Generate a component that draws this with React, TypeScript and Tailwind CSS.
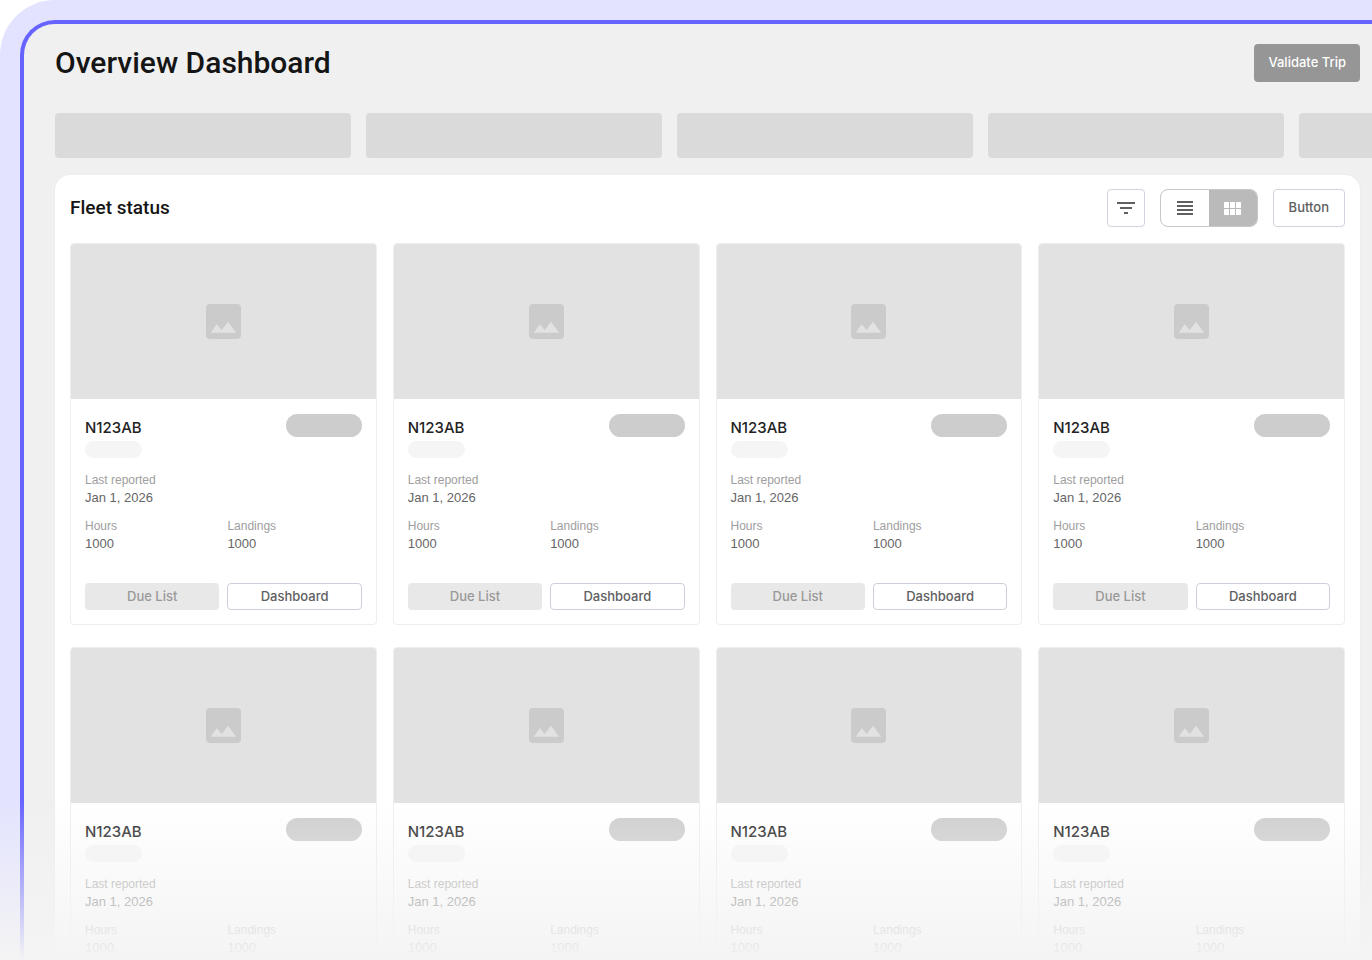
import React from 'react';

interface Aircraft {
  id: number;
  registration: string;
  lastReported: string;
  hours: number;
  landings: number;
}

const fleet: Aircraft[] = Array.from({ length: 8 }, (_, i) => ({
  id: i + 1,
  registration: 'N123AB',
  lastReported: 'Jan 1, 2026',
  hours: 1000,
  landings: 1000,
}));

const FilterIcon: React.FC = () => (
  <svg width="18" height="12" viewBox="0 0 18 12" fill="currentColor" aria-hidden="true">
    <rect width="18" height="2" />
    <rect x="3" y="5" width="12" height="2" />
    <rect x="7" y="10" width="4" height="2" />
  </svg>
);

const ListIcon: React.FC = () => (
  <svg width="16" height="14" viewBox="0 0 16 14" fill="currentColor" aria-hidden="true">
    <rect width="16" height="2" />
    <rect y="4" width="16" height="2" />
    <rect y="8" width="16" height="2" />
    <rect y="12" width="16" height="2" />
  </svg>
);

const GridIcon: React.FC = () => (
  <svg width="17" height="13" viewBox="0 0 17 13" fill="currentColor" aria-hidden="true">
    <rect width="5" height="6" rx="0.6" />
    <rect x="6" width="5" height="6" rx="0.6" />
    <rect x="12" width="5" height="6" rx="0.6" />
    <rect y="7" width="5" height="6" rx="0.6" />
    <rect x="6" y="7" width="5" height="6" rx="0.6" />
    <rect x="12" y="7" width="5" height="6" rx="0.6" />
  </svg>
);

const ImageIcon: React.FC = () => (
  <svg width="35" height="35" viewBox="0 0 35 35" aria-hidden="true">
    <rect width="35" height="35" rx="4" fill="#cbcbcb" />
    <path d="M4.8 28.8L10.7 20.3L15.7 26L22 17.7L30.2 28.8Z" fill="#e2e2e2" />
  </svg>
);

const Field: React.FC<{ label: string; value: string | number }> = ({ label, value }) => (
  <div>
    <dt className="text-xs leading-[17px] text-[#9e9e9e]">{label}</dt>
    <dd className="text-[13px] leading-[17px] text-[#666666]">{value}</dd>
  </div>
);

interface AircraftCardProps {
  aircraft: Aircraft;
  showActions: boolean;
}

const AircraftCard: React.FC<AircraftCardProps> = ({ aircraft, showActions }) => (
  <article className="overflow-hidden rounded-[4px] border border-[#ededf3] bg-white">
    <div className="flex h-[155px] items-center justify-center bg-[#e2e2e2]">
      <ImageIcon />
    </div>
    <div className="p-[14px] pt-[15px]">
      <div className="flex items-start justify-between">
        <h3 className="font-['Inter',sans-serif] text-[15px] leading-[27px] font-medium text-[#222222]">
          {aircraft.registration}
        </h3>
        <span className="h-[23px] w-[76px] rounded-full bg-[#cdcdcd]" />
      </div>
      <div className="h-[17px] w-[57px] rounded-full bg-[#f5f5f5]" />
      <dl className="mt-[14px] grid grid-cols-2 gap-x-2 gap-y-3">
        <div className="col-span-2">
          <Field label="Last reported" value={aircraft.lastReported} />
        </div>
        <Field label="Hours" value={aircraft.hours} />
        <Field label="Landings" value={aircraft.landings} />
      </dl>
      {showActions && (
        <div className="mt-[31px] grid grid-cols-2 gap-2 font-['Inter',sans-serif] text-[13px] font-medium">
          <button type="button" className="h-[27px] rounded-[4px] bg-[#e8e8e8] text-[#999999]">
            Due List
          </button>
          <button
            type="button"
            className="h-[27px] rounded-[4px] border border-[#cfcfda] bg-white text-[#606060]"
          >
            Dashboard
          </button>
        </div>
      )}
    </div>
  </article>
);

const App: React.FC = () => {
  return (
    <div className="relative h-screen overflow-hidden bg-white font-['Liberation_Sans',Arial,sans-serif]">
      <div className="rounded-tl-[55px] bg-[#e3e3ff] pt-5 pl-5">
        <main className="min-h-screen rounded-tl-[35px] border-t-4 border-l-4 border-[#6663ff] bg-[#f0f0f0] pt-5 pr-3 pl-[31px]">
          <header className="flex h-[38px] items-center justify-between">
            <h1 className="font-['Roboto',sans-serif] text-[30px] leading-[38px] font-medium text-[#151515]">
              Overview Dashboard
            </h1>
            <button
              type="button"
              className="h-[38px] rounded-[4px] bg-[#969696] px-[14px] font-['Inter',sans-serif] text-[13px] font-medium text-white"
            >
              Validate Trip
            </button>
          </header>

          <div className="mt-[31px] -mr-3 flex gap-[15px] overflow-hidden">
            {[1, 2, 3, 4, 5].map((n) => (
              <div key={n} className="h-[45px] w-[296px] shrink-0 rounded-[4px] bg-[#dadada]" />
            ))}
          </div>

          <section className="mt-[17px] rounded-[15px] bg-white p-[15px] pt-[14px] ring-1 ring-[#ececf1]">
            <div className="flex h-[38px] items-center justify-between">
              <h2 className="font-['Roboto',sans-serif] text-[19px] font-medium text-[#151515]">
                Fleet status
              </h2>
              <div className="flex gap-[15px] text-[#606060]">
                <button
                  type="button"
                  aria-label="Filter"
                  className="flex size-[38px] items-center justify-center rounded-[4px] border border-[#d3d3de]"
                >
                  <FilterIcon />
                </button>
                <div className="flex h-[38px] w-[98px] overflow-hidden rounded-lg border border-[#c6c6cc]">
                  <button
                    type="button"
                    aria-label="List view"
                    className="flex flex-1 items-center justify-center"
                  >
                    <ListIcon />
                  </button>
                  <button
                    type="button"
                    aria-label="Grid view"
                    className="flex flex-1 items-center justify-center bg-[#bababa] text-white"
                  >
                    <GridIcon />
                  </button>
                </div>
                <button
                  type="button"
                  className="h-[38px] rounded-[4px] border border-[#d3d3de] px-[15px] font-['Inter',sans-serif] text-[13px] font-medium"
                >
                  Button
                </button>
              </div>
            </div>

            <div className="mt-4 grid grid-cols-4 gap-x-4 gap-y-[22px]">
              {fleet.map((aircraft, index) => (
                // the second row fades out before its actions
                <AircraftCard key={aircraft.id} aircraft={aircraft} showActions={index < 4} />
              ))}
            </div>
          </section>
        </main>
      </div>
      <div className="pointer-events-none absolute inset-x-0 bottom-0 h-40 bg-linear-to-b from-[#f4f4f4]/0 to-[#f4f4f4]" />
    </div>
  );
};

export default App;
